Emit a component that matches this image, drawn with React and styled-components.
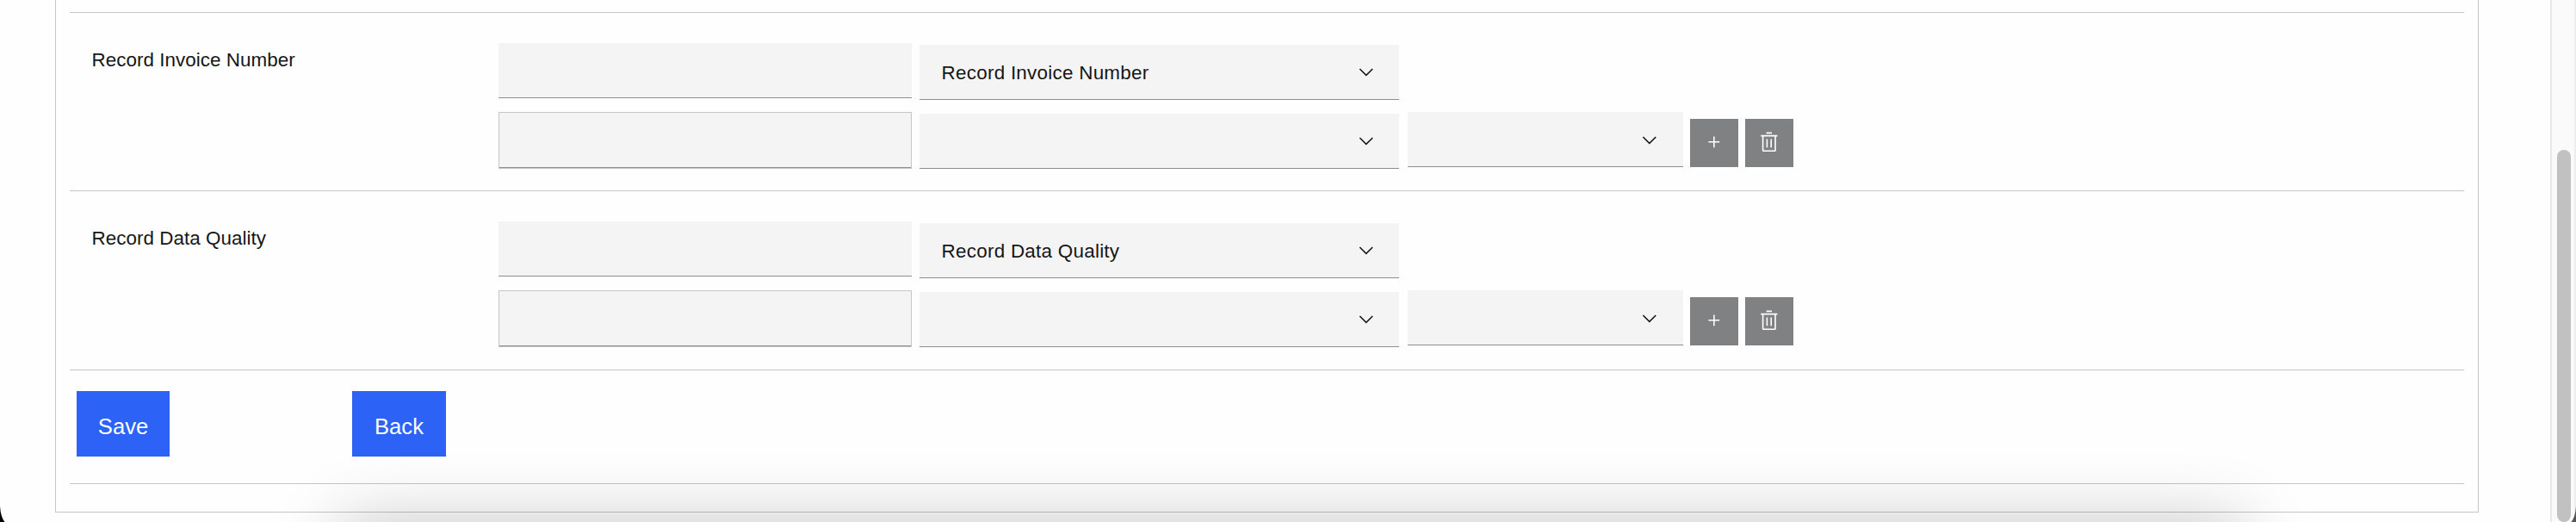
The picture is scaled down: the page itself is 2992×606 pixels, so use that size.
import React from 'react';
import styled, { createGlobalStyle } from 'styled-components';

const Global = createGlobalStyle`
  * { box-sizing: border-box; }
  body { margin: 0; background: #fefefe; overflow: hidden; font-family: "Liberation Sans", Arial, sans-serif; color: #161616; }
`;

const Window = styled.div`
  position: relative;
  display: flex;
  height: 606px;
  overflow: hidden;
`;

const Main = styled.main`
  flex: 1;
  padding: 0 83px 11px 64px;
`;

const Panel = styled.section`
  height: 595px;
  padding: 14px 16px 0;
  border: 1px solid #c6c6c6;
  border-top: 0;
`;

const Group = styled.div`
  display: flex;
  height: ${(p) => p.$height}px;
  padding: 35px 0 0 25px;
  border-top: 1px solid #c6c6c6;
`;

const Label = styled.div`
  width: 473px;
  padding: 5px 0 0 0.6px;
  font-size: 22.4px;
  line-height: 29px;
  letter-spacing: 0.04px;
  white-space: nowrap;
`;

const Rows = styled.div`
  display: flex;
  flex-direction: column;
  gap: 14px;
`;

const Row = styled.div`
  display: flex;
  align-items: flex-start;
  height: 66px;
`;

const Input = styled.input`
  width: 480px;
  height: 64px;
  margin: 0 9px 0 0;
  padding: 0 25px;
  border: 0;
  border-bottom: 1px solid #8d8d8d;
  border-radius: 0;
  background: #f4f4f4;
  outline: none;
`;

const Outlined = styled.div`
  width: 480px;
  height: 66px;
  margin-right: 9px;
  border: 1px solid #c6c6c6;

  ${Input} {
    display: block;
    width: 100%;
    margin: 0;
  }
`;

const Select = styled.div`
  display: flex;
  align-items: center;
  justify-content: space-between;
  width: ${(p) => p.$width}px;
  height: 64px;
  margin: ${(p) => p.$top || 0}px ${(p) => p.$right || 0}px 0 0;
  padding: ${(p) => p.$drop || 0}px ${(p) => p.$inset}px 0 25.6px;
  border-bottom: 1px solid #8d8d8d;
  background: #f4f4f4;
  font-size: 22.4px;
  line-height: 29px;
  letter-spacing: 0.27px;
`;

const SelectText = styled.span`
  padding-top: 2px;
`;

const Chevron = styled.svg`
  width: 25.6px;
  height: 25.6px;
  fill: #161616;
`;

const IconButton = styled.button`
  display: flex;
  justify-content: center;
  width: 56px;
  height: 56px;
  margin: 8px 8px 0 0;
  padding: 14.4px 0 0;
  border: 0;
  background: #808182;

  svg { width: 25.6px; height: 25.6px; fill: #fff; }
`;

const Actions = styled.div`
  display: flex;
  gap: 212px;
  height: 132px;
  padding: 24px 0 0 8px;
  border-top: 1px solid #c6c6c6;
`;

const Button = styled.button`
  width: ${(p) => p.$width}px;
  height: 76px;
  padding: 6px 0 0;
  border: 0;
  background: #2c62f6;
  color: #fff;
  font: 25.6px/32px "Liberation Sans", Arial, sans-serif;
  text-align: center;
`;

const Divider = styled.div`
  height: 1px;
  background: #c6c6c6;
`;

const Scrollbar = styled.aside`
  width: 30px;
  padding: 174px 4px 0 6px;
  border-left: 2px solid #e8e8e8;
  border-right: 2px solid #ededed;
  background: #fafafa;
`;

const Thumb = styled.div`
  height: 432px;
  border-radius: 8px;
  background: #c1c1c1;
`;

const DockShadow = styled.div`
  position: absolute;
  left: 395px;
  right: 387px;
  top: 606px;
  height: 200px;
  pointer-events: none;
  box-shadow: 0 0 80px rgba(0, 0, 0, 0.22);
`;

const Corner = styled.svg`
  position: absolute;
  bottom: 0;
  ${(p) => (p.$side === 'left' ? 'left: 0;' : 'right: 0; transform: scaleX(-1);')}
  width: 6px;
  height: 20px;
  fill: ${(p) => (p.$side === 'left' ? '#000' : '#555')};
`;

const ChevronIcon = () => (
  <Chevron viewBox="0 0 16 16"><path d="M8 11 3 6 3.7 5.3 8 9.6 12.3 5.3 13 6Z" /></Chevron>
);

const Field = ({ name, height }) => (
  <Group $height={height}>
    <Label>{name}</Label>
    <Rows>
      <Row>
        <Input />
        <Select $width={557} $top={2} $inset={25.6}><SelectText>{name}</SelectText><ChevronIcon /></Select>
      </Row>
      <Row>
        <Outlined><Input /></Outlined>
        <Select $width={557} $top={2} $right={10} $inset={25.6}><SelectText /><ChevronIcon /></Select>
        <Select $width={320} $right={8} $inset={26.4} $drop={2}><SelectText /><ChevronIcon /></Select>
        <IconButton aria-label="Add">
          <svg viewBox="0 0 32 32"><path d="M17 15V8h-2v7H8v2h7v7h2v-7h7v-2z" /></svg>
        </IconButton>
        <IconButton aria-label="Delete">
          <svg viewBox="0 0 32 32">
            <path d="M12 12h2v12h-2zM18 12h2v12h-2zM12 2h8v2h-8z" />
            <path fillRule="evenodd" d="M4 6v2h2v20a2 2 0 0 0 2 2h16a2 2 0 0 0 2-2V8h2V6ZM8 28V8h16v20Z" />
          </svg>
        </IconButton>
      </Row>
    </Rows>
  </Group>
);

const CornerMask = ({ side }) => (
  <Corner $side={side} viewBox="0 0 6 20"><path d="M0 2Q.8 14 5.5 20H0Z" /></Corner>
);

export default function App() {
  return (
    <>
      <Global />
      <Window>
        <Main>
          <Panel>
            <Field name="Record Invoice Number" height={207} />
            <Field name="Record Data Quality" height={208} />
            <Actions>
              <Button $width={108}>Save</Button>
              <Button $width={109}>Back</Button>
            </Actions>
            <Divider />
          </Panel>
        </Main>
        <Scrollbar><Thumb /></Scrollbar>
        <DockShadow />
        <CornerMask side="left" />
        <CornerMask side="right" />
      </Window>
    </>
  );
}
